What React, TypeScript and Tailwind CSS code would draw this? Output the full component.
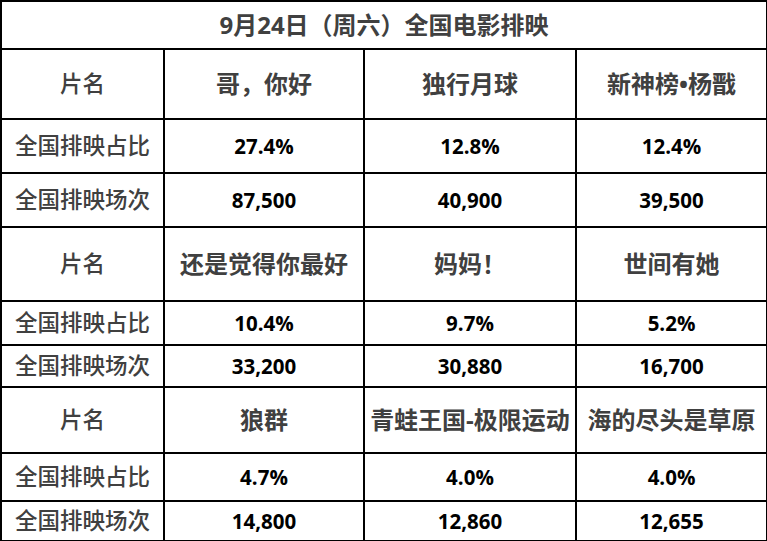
import React from 'react';

interface Group {
  titles: string[];
  ratio: string[];
  shows: string[];
  heights: [number, number, number];
}

const groups: Group[] = [
  {
    titles: ['哥，你好', '独行月球', '新神榜•杨戬'],
    ratio: ['27.4%', '12.8%', '12.4%'],
    shows: ['87,500', '40,900', '39,500'],
    heights: [70, 54, 54],
  },
  {
    titles: ['还是觉得你最好', '妈妈！', '世间有她'],
    ratio: ['10.4%', '9.7%', '5.2%'],
    shows: ['33,200', '30,880', '16,700'],
    heights: [74, 44, 42],
  },
  {
    titles: ['狼群', '青蛙王国-极限运动', '海的尽头是草原'],
    ratio: ['4.7%', '4.0%', '4.0%'],
    shows: ['14,800', '12,860', '12,655'],
    heights: [66, 48, 40],
  },
];

const font = { fontFamily: '"Open Sans", "Noto Sans CJK SC", sans-serif' };

const cell = 'border-2 border-black text-center align-middle p-0 whitespace-nowrap';
const label = `${cell} text-[22.5px] font-medium text-[#404040]`;
const num = `${cell} text-[20.5px] font-bold text-black`;

export default function App() {
  return (
    <div className="w-[767px] h-[541px] bg-white" style={font}>
      <table className="border-collapse table-fixed w-[766px]">
        <colgroup>
          <col className="w-[163px]" />
          <col className="w-[200px]" />
          <col className="w-[212px]" />
          <col className="w-[191px]" />
        </colgroup>
        <tbody>
          <tr className="h-[48px]">
            <td colSpan={4} className={`${cell} text-[24px] font-bold text-[#404040]`}>
              9月24日（周六）全国电影排映
            </td>
          </tr>
          {groups.map((g, i) => (
            <React.Fragment key={i}>
              <tr style={{ height: g.heights[0] }}>
                <td className={label}>片名</td>
                {g.titles.map(t => (
                  <td key={t} className={`${cell} text-[24px] font-bold text-[#404040]`}>{t}</td>
                ))}
              </tr>
              <tr style={{ height: g.heights[1] }}>
                <td className={label}>全国排映占比</td>
                {g.ratio.map((v, j) => (
                  <td key={j} className={num}>{v}</td>
                ))}
              </tr>
              <tr style={{ height: g.heights[2] }}>
                <td className={label}>全国排映场次</td>
                {g.shows.map((v, j) => (
                  <td key={j} className={num}>{v}</td>
                ))}
              </tr>
            </React.Fragment>
          ))}
        </tbody>
      </table>
    </div>
  );
}
